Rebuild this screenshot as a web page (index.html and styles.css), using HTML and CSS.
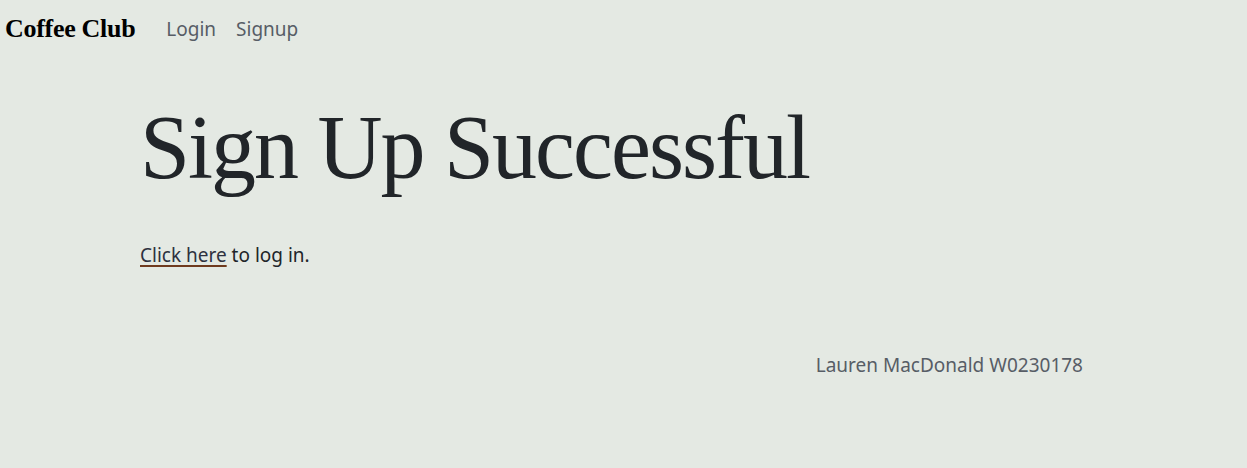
FILE: index.html
```html
<!DOCTYPE html>
<html lang="en">
<head>
<meta charset="utf-8">
<title>Sign Up Successful</title>
<link rel="stylesheet" href="styles.css">
</head>
<body>
<nav class="navbar">
  <a class="brand" href="#">Coffee Club</a>
  <ul class="nav-links">
    <li><a href="#">Login</a></li>
    <li><a href="#">Signup</a></li>
  </ul>
</nav>
<main class="container">
  <h1 class="title">Sign Up Successful</h1>
  <p class="lead"><a href="#" class="link">Click here</a> to log in.</p>
</main>
<footer class="footer">
  <p>Lauren MacDonald W0230178</p>
</footer>
</body>
</html>
```
FILE: styles.css
```css
* { box-sizing: border-box; }
html, body { margin: 0; padding: 0; }
body {
  background: #e4e9e3;
  color: #212529;
  font-family: "Noto Sans", "Open Sans", sans-serif;
  font-size: 19px;
  height: 468px;
  overflow: hidden;
}
.navbar {
  display: flex;
  align-items: center;
  height: 58px;
  padding: 0 5px;
}
.brand {
  font-family: "Liberation Serif", serif;
  font-weight: bold;
  font-size: 26px;
  color: #000;
  text-decoration: none;
  letter-spacing: -0.3px;
}
.nav-links {
  display: flex;
  list-style: none;
  margin: 0 0 0 31px;
  padding: 0;
  gap: 20px;
}
.nav-links a {
  color: #575d66;
  text-decoration: none;
  font-size: 19px;
}
.container {
  padding: 36px 0 0 140px;
}
.title {
  margin: 0;
  font-family: "Liberation Serif", serif;
  font-weight: normal;
  font-size: 90px;
  line-height: 1.2;
  letter-spacing: -2px;
}
.lead {
  margin: 40px 0 0 0;
  font-size: 19px;
}
.link {
  color: #2e3140;
  text-decoration-line: underline;
  text-decoration-color: #6f3a1e;
  text-decoration-thickness: 2px;
  text-underline-offset: 3px;
}
.footer {
  display: flex;
  justify-content: flex-end;
  padding: 84px 164px 0 0;
}
.footer p {
  margin: 0;
  color: #575d66;
  font-size: 19px;
}
```
